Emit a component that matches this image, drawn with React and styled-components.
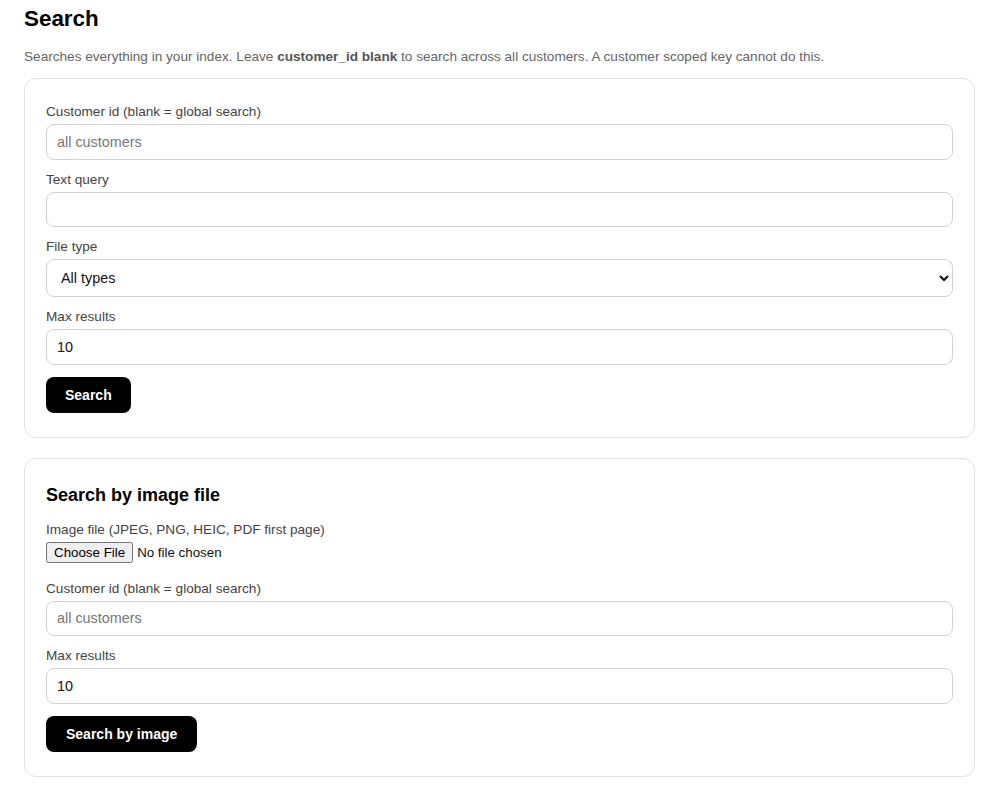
import styled, { createGlobalStyle } from 'styled-components';

const GlobalStyle = createGlobalStyle`
	* {
		box-sizing: border-box;
	}
	body {
		margin: 0;
		background: #ffffff;
		font-family: 'Liberation Sans', Arial, sans-serif;
		color: #111111;
	}
`;

function App() {
	return (
		<>
			<GlobalStyle />
			<Page>
				<Title>Search</Title>
				<Intro>
					Searches everything in your index. Leave <b>customer_id blank</b> to
					search across all customers. A customer scoped key cannot do this.
				</Intro>

				<Card>
					<Field>
						<Label htmlFor="cid">Customer id (blank = global search)</Label>
						<Input id="cid" placeholder="all customers" />
					</Field>
					<Field>
						<Label htmlFor="q">Text query</Label>
						<Input id="q" />
					</Field>
					<Field>
						<Label htmlFor="ftype">File type</Label>
						<Select id="ftype" defaultValue="all">
							<option value="all">All types</option>
							<option value="pdf">PDF</option>
							<option value="image">Image</option>
						</Select>
					</Field>
					<Field>
						<Label htmlFor="max">Max results</Label>
						<Input id="max" defaultValue="10" />
					</Field>
					<Button type="button">Search</Button>
				</Card>

				<Card>
					<CardTitle>Search by image file</CardTitle>
					<Field gap="18px">
						<Label htmlFor="img">Image file (JPEG, PNG, HEIC, PDF first page)</Label>
						<FileInput id="img" type="file" />
					</Field>
					<Field>
						<Label htmlFor="cid2">Customer id (blank = global search)</Label>
						<Input id="cid2" placeholder="all customers" />
					</Field>
					<Field>
						<Label htmlFor="max2">Max results</Label>
						<Input id="max2" defaultValue="10" />
					</Field>
					<Button type="button" wide>Search by image</Button>
				</Card>
			</Page>
		</>
	);
}

export default App;

const Page = styled.main`
	padding: 5px 21px 16px 24px;
`;

const Title = styled.h1`
	margin: 0 0 15px;
	font-size: 22.4px;
	line-height: 28px;
	font-weight: 700;
	color: #000;
`;

const Intro = styled.p`
	margin: 0 0 12px;
	font-size: 13.6px;
	line-height: 18px;
	color: #666666;
	b {
		color: #555555;
		font-weight: 700;
	}
`;

const Card = styled.section`
	border: 1px solid #e2e2e2;
	border-radius: 12px;
	padding: 25px 21px 24px;
	margin-bottom: 20px;
	display: flex;
	flex-direction: column;
	align-items: flex-start;
`;

const CardTitle = styled.h2`
	margin: 1px 0 16px;
	font-size: 18px;
	line-height: 21px;
	font-weight: 700;
	color: #000;
`;

const Field = styled.div`
	width: 100%;
	display: flex;
	flex-direction: column;
	align-items: flex-start;
	gap: 5px;
	margin-bottom: ${(props) => props.gap || '12px'};
`;

const Label = styled.label`
	font-size: 13.6px;
	line-height: 15px;
	color: #444444;
`;

const Input = styled.input`
	width: 100%;
	height: 35.5px;
	padding: 0 10px;
	border: 1px solid #d2d2d2;
	border-radius: 8px;
	font-family: inherit;
	font-size: 14.4px;
	color: #111;
	background: #fff;
	outline: none;
	&::placeholder {
		color: #777777;
	}
`;

const Select = styled.select`
	width: 100%;
	height: 38px;
	padding: 0 10px;
	border: 1px solid #d2d2d2;
	border-radius: 8px;
	font-family: inherit;
	font-size: 14.4px;
	color: #111;
	background: #fff;
	outline: none;
`;

const FileInput = styled.input`
	font-family: inherit;
	font-size: 13.33px;
	color: #111;
`;

const Button = styled.button`
	height: 36px;
	padding: 0 ${(props) => (props.wide ? '20px' : '19px')};
	border: none;
	border-radius: 8px;
	background: #000;
	color: #fff;
	font-family: inherit;
	font-size: 14px;
	font-weight: 700;
	cursor: pointer;
`;
